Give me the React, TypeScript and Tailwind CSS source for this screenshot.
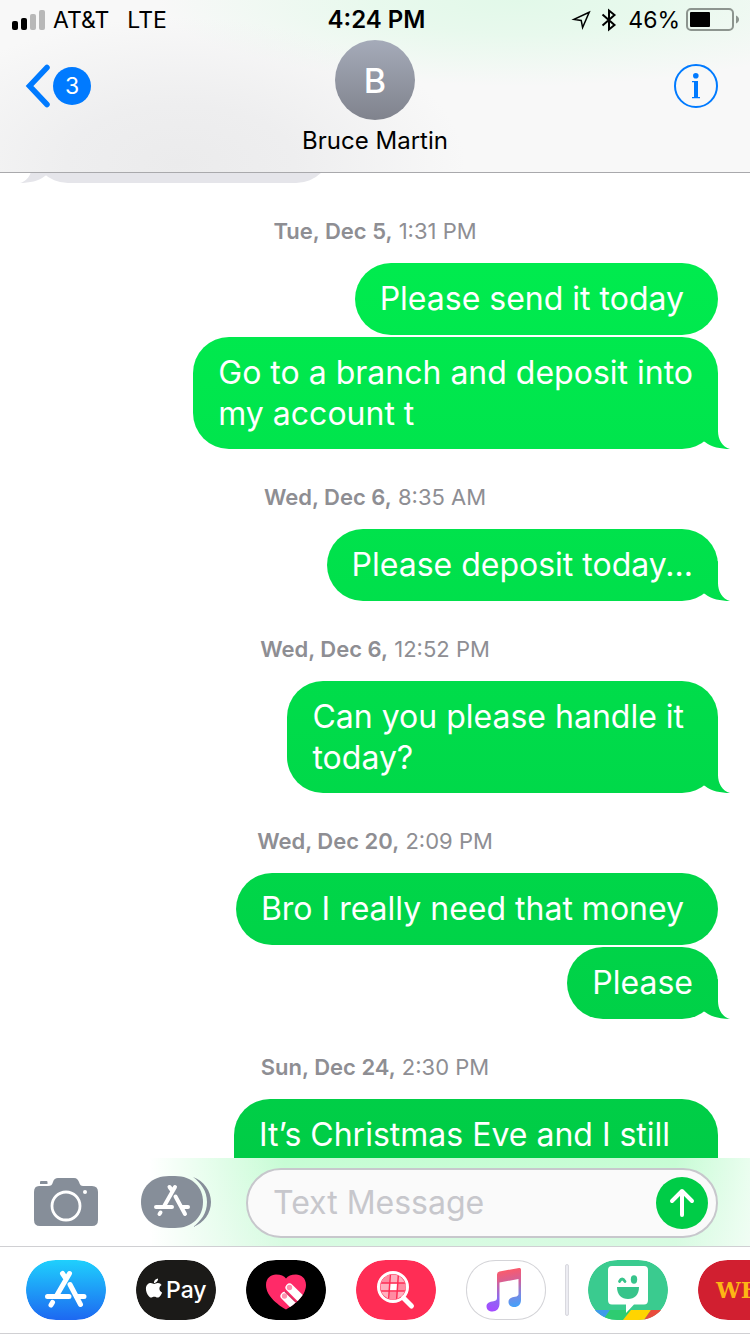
import type { ReactNode } from 'react';
import { FaApple } from 'react-icons/fa';

type Message = { text: string; tail?: boolean; wide?: boolean };
type Group = { day: string; time: string; messages: Message[] };

const groups: Group[] = [
  {
    day: 'Tue, Dec 5,',
    time: '1:31 PM',
    messages: [
      { text: 'Please send it today ' },
      { text: 'Go to a branch and deposit into\nmy account t', tail: true },
    ],
  },
  { day: 'Wed, Dec 6,', time: '8:35 AM', messages: [{ text: 'Please deposit today...', tail: true }] },
  { day: 'Wed, Dec 6,', time: '12:52 PM', messages: [{ text: 'Can you please handle it \ntoday?', tail: true }] },
  {
    day: 'Wed, Dec 20,',
    time: '2:09 PM',
    messages: [{ text: 'Bro I really need that money ' }, { text: 'Please', tail: true }],
  },
  { day: 'Sun, Dec 24,', time: '2:30 PM', messages: [{ text: 'It’s Christmas Eve and I still', wide: true }] },
];

const sentFill = 'bg-[linear-gradient(to_bottom,#00eb4e_20%,#00cc46_87%)] bg-fixed';

function Bubble({ text, tail, wide }: Message) {
  return (
    <div
      className={`relative rounded-[36px] px-[25px] py-[15px] text-[32px] leading-[41px] whitespace-pre text-white ${wide ? 'min-h-28 w-[484px]' : 'min-h-[72px]'} ${sentFill}`}
    >
      {text}
      {tail && (
        <span
          aria-hidden="true"
          className={`absolute -right-3 bottom-0 h-10 w-[34px] [clip-path:path('M0_10L22_0V22C22_30_26_38_34_40C25_40_15_38_9_33L0_28Z')] ${sentFill}`}
        />
      )}
    </div>
  );
}

function StatusBar() {
  return (
    <div className="grid h-10 grid-cols-[1fr_auto_1fr] items-center px-3 text-[23px] leading-none">
      <div className="flex items-center">
        <svg width="33" height="20" viewBox="0 0 33 20" aria-hidden="true">
          <rect x="0" y="11" width="6" height="9" rx="2" />
          <rect x="9" y="8" width="6" height="12" rx="2" />
          <rect x="18" y="4" width="6" height="16" rx="2" fill="#b8b8b8" />
          <rect x="27" y="0" width="6" height="20" rx="2" fill="#b8b8b8" />
        </svg>
        <span className="ml-2">AT&amp;T</span>
        <span className="ml-[18px]">LTE</span>
      </div>
      <span className="pl-[3px] text-2xl leading-none font-semibold">4:24 PM</span>
      <div className="-mr-[2px] flex items-center justify-end">
        <svg width="20" height="20" viewBox="0 0 20 20" fill="none" stroke="#000" strokeWidth="1.5" aria-hidden="true">
          <path d="M18.200 2.300 3 9.400 10.200 10.400 11.600 17.500Z" />
        </svg>
        <svg className="ml-[10px]" width="16" height="24" viewBox="0 0 16 24" fill="none" stroke="#000" strokeWidth="2" aria-hidden="true">
          <path d="M1.500 6.500 13.500 17 8 21.500V2.500L13.500 7 1.500 17.500" />
        </svg>
        <span className="ml-[11px]">46%</span>
        <svg className="ml-[6px]" width="54" height="24" viewBox="0 0 54 24" aria-hidden="true">
          <rect x="1" y="1" width="46" height="21" rx="4" fill="none" stroke="#8d958f" strokeWidth="2" />
          <rect x="4" y="4" width="20" height="15" rx="1" />
          <path d="M50 7.500C54 9 54 14 50 15.500Z" fill="#8d958f" />
        </svg>
      </div>
    </div>
  );
}

function Header() {
  return (
    <header className="shrink-0 border-b border-[#a9a9ac] bg-[#f8f8f8] bg-[radial-gradient(ellipse_38%_85%_at_24%_95%,#ebebec_0%,#eeeeef_40%,#f8f8f800_100%),radial-gradient(ellipse_48%_50%_at_69%_0%,#e2f9e9_0%,#e8f9ed_40%,#f8f8f800_100%)] text-black">
      <StatusBar />
      <div className="grid h-[132px] grid-cols-[1fr_auto_1fr] items-start px-8">
        <button type="button" aria-label="Back" className="mt-6 -ml-[7px] flex h-11 items-center justify-self-start">
          <svg width="26" height="44" viewBox="0 0 26 44" fill="none" stroke="#007aff" strokeWidth="5.500" strokeLinecap="round" strokeLinejoin="miter" aria-hidden="true">
            <path d="M22 3.500 4.500 22 22 40.500" />
          </svg>
          <span className="ml-[2px] flex size-[38px] items-center justify-center rounded-full bg-[#007aff] text-[23px] leading-none text-white">3</span>
        </button>
        <div className="flex flex-col items-center">
          <div className="flex size-20 items-center justify-center rounded-full bg-linear-to-b from-[#a5abb9] to-[#80838d] pt-px text-[34px] font-medium text-white">B</div>
          <h1 className="mt-[6px] text-2xl leading-[30px]">Bruce Martin</h1>
        </div>
        <button type="button" aria-label="Details" className="mt-6 justify-self-end">
          <svg width="44" height="44" viewBox="0 0 44 44" aria-hidden="true">
            <circle cx="22" cy="22" r="21" fill="none" stroke="#007aff" strokeWidth="2" />
            <circle cx="21.800" cy="11.700" r="2.800" fill="#007aff" />
            <path d="M18 17h6v16h2v1.200h-8V33h2V18.200h-2Z" fill="#007aff" />
          </svg>
        </button>
      </div>
    </header>
  );
}

function Thread() {
  return (
    <main className="min-h-0 flex-1 overflow-hidden bg-white">
      <div className="relative -mt-[62px] ml-8 h-[72px] w-[300px] rounded-[36px] bg-[#e5e5ea]">
        <svg className="absolute bottom-0 -left-3" width="34" height="40" viewBox="0 0 34 40" fill="#e5e5ea" aria-hidden="true">
          <path d="M34 10L12 0V22C12 30 8 38 0 40C9 40 19 38 25 33L34 28Z" />
        </svg>
      </div>
      {groups.map((group) => (
        <section key={group.day + group.time}>
          <h2 className="pt-[33px] pb-[17px] text-center text-[22px] leading-[30px] text-[#8e8e93]">
            <span className="font-semibold">{group.day}</span> {group.time}
          </h2>
          <div className="flex flex-col items-end gap-[2px] pr-8">
            {group.messages.map((message) => (
              <Bubble key={message.text} {...message} />
            ))}
          </div>
        </section>
      ))}
    </main>
  );
}

function Composer() {
  return (
    <form
      onSubmit={(event) => event.preventDefault()}
      className="flex h-[88px] shrink-0 items-center bg-[#fefefe] bg-[linear-gradient(to_right,#ffffff_20%,#ffffff00_38%,#ffffff00_90%,#ffffffa0_100%),linear-gradient(to_bottom,#c6fcd4,#d8fbe2)] pr-8 pl-[34px]"
    >
      <button type="button" aria-label="Camera">
        <svg width="64" height="48" viewBox="0 0 64 48" aria-hidden="true">
          <path d="M7 3h5.500q1 0 1 1v2h-7.500V4q0-1 1-1Z" fill="#868e99" />
          <path d="M5 8H14C17 8 18 7 19 4 20 1 21.500 0 24 0H40C43 0 44 2 45 4 46 7 47 8 49 8H58Q64 8 64 14V42Q64 48 58 48H6Q0 48 0 42V14Q0 8 5 8Z" fill="#868e99" />
          <circle cx="32" cy="28" r="14" fill="none" stroke="#fff" strokeWidth="2.800" />
          <circle cx="51" cy="14" r="2" fill="#fff" />
        </svg>
      </button>
      <button type="button" aria-label="Apps" className="ml-[43px]">
        <svg width="70" height="52" viewBox="0 0 70 52" fill="#868e99" aria-hidden="true">
          <path d="M28 0H34C51 0 62 11 62 26S51 52 34 52H28C11 52 0 41 0 26S11 0 28 0Z" />
          <path d="M52 1C63 5 70 15 70 26S63 47 52 51C60 45 66 37 66 26S60 7 52 1Z" />
          <g fill="none" stroke="#fff" strokeWidth="4" strokeLinecap="round">
            <path d="M34 11 23.500 29.500M28.500 11 31 14.500M34.500 20.500 44 38M15 31H31M41.500 31H47M19.500 36.500 18.500 38" />
          </g>
        </svg>
      </button>
      <div className="mt-[2px] ml-[35px] flex h-[70px] min-w-0 flex-1 items-center rounded-full border-2 border-[#c7c7cc] bg-[#fafafa] pr-2 pl-[25px]">
        <input
          type="text"
          aria-label="Text Message"
          placeholder="Text Message"
          className="min-w-0 flex-1 bg-transparent text-[32px] leading-10 text-black outline-none placeholder:text-[#c7c7cc]"
        />
        <button type="submit" aria-label="Send" className="flex size-[52px] shrink-0 items-center justify-center rounded-full bg-[#00cc47]">
          <svg width="28" height="32" viewBox="0 0 28 32" fill="none" stroke="#fff" strokeWidth="4" strokeLinecap="round" strokeLinejoin="round" aria-hidden="true">
            <path d="M14 28V4M4 14 14 4 24 14" />
          </svg>
        </button>
      </div>
    </form>
  );
}

const pill = 'M30 0H50C68 0 80 13 80 30S68 60 50 60H30C12 60 0 47 0 30S12 0 30 0Z';

function AppTile({ label, fill, outlined, children }: { label: string; fill: string; outlined?: boolean; children: ReactNode }) {
  return (
    <button type="button" aria-label={label} className="h-[60px] w-20 shrink-0">
      <svg width="80" height="60" viewBox="0 0 80 60" className="block" aria-hidden="true">
        <defs>
          <linearGradient id="store" x1="0" y1="0" x2="0" y2="1">
            <stop offset="0" stopColor="#1fd0fd" />
            <stop offset="1" stopColor="#1d68f1" />
          </linearGradient>
          <linearGradient id="note" gradientUnits="userSpaceOnUse" x1="34" y1="10" x2="42" y2="50">
            <stop offset="0" stopColor="#ff5a66" />
            <stop offset="0.350" stopColor="#d0619c" />
            <stop offset="0.650" stopColor="#7f86e0" />
            <stop offset="1" stopColor="#3aa6ff" />
          </linearGradient>
          <linearGradient id="noteLeft" gradientUnits="userSpaceOnUse" x1="20" y1="48" x2="33" y2="12">
            <stop offset="0" stopColor="#a44dff" />
            <stop offset="0.350" stopColor="#8a6bf0" />
            <stop offset="1" stopColor="#ff5a66" />
          </linearGradient>
          <clipPath id="pillClip">
            <path d={pill} />
          </clipPath>
        </defs>
        <g clipPath="url(#pillClip)">
          <path d={pill} fill={fill} stroke={outlined ? '#d4d4d8' : 'none'} strokeWidth="2" />
          {children}
        </g>
      </svg>
    </button>
  );
}

function AppStrip() {
  return (
    <nav aria-label="Apps" className="flex h-[88px] shrink-0 items-start gap-[30px] overflow-hidden border-y border-[#d0d0d3] bg-white pt-[13px] pl-[26px]">
      <AppTile label="App Store" fill="url(#store)">
        <g fill="none" stroke="#fff" strokeWidth="5" strokeLinecap="round">
          <path d="M43.500 13.500 31 35M36.500 13.500 39.500 18M44 24.500 54.500 44.500M21.500 36.500H43M51.500 36.500H58M26.500 42.500 25 45" />
        </g>
      </AppTile>
      <AppTile label="Apple Pay" fill="#1b1a18">
        <FaApple x="7" y="17" size={22} color="#fff" />
        <text x="30" y="38" fill="#fff" fontSize="23" fontWeight="500">Pay</text>
      </AppTile>
      <AppTile label="Digital Touch" fill="#000">
        <defs>
          <clipPath id="heartClip">
            <path d="M40 49.500C34 46 20 37 20 25C20 18 25 14.500 30 14.500C35 14.500 38 16 40 18.500C42 16 45 14.500 50 14.500C55 14.500 60 18 60 25C60 37 46 46 40 49.500Z" />
          </clipPath>
        </defs>
        <g clipPath="url(#heartClip)">
          <path d="M20 14h40v36H20Z" fill="#ff2a68" />
          <g stroke="#fff" strokeWidth="8" strokeLinecap="round">
            <path d="M43.500 27.500 62 46M38.500 36 55 52.500" />
          </g>
          <path d="M39 31.500 60 52" stroke="#cc2456" strokeWidth="1.200" />
          <circle cx="43.500" cy="27.500" r="2.700" fill="#ff8fae" />
          <circle cx="38.500" cy="36" r="2.700" fill="#ff8fae" />
        </g>
      </AppTile>
      <AppTile label="Images" fill="#ff2d55">
        <defs>
          <clipPath id="lensClip">
            <circle cx="37" cy="27" r="12.500" />
          </clipPath>
        </defs>
        <g clipPath="url(#lensClip)">
          <path d="M24 14h26v26H24Z" fill="#ffb0bf" />
          <path d="M34 23.500h7v7h-7Z" fill="#fff" />
          <path d="M24 14h9v9h-9ZM42 23h8v8h-8ZM34 32h7v8h-7Z" fill="#ff8ba2" />
          <path d="M34.500 13 32.500 41M42.500 13 40.500 41M24 23H50M24 31H50" stroke="#ff2d55" strokeWidth="1.500" />
        </g>
        <circle cx="37" cy="27" r="14.500" fill="none" stroke="#fff" strokeWidth="3" />
        <path d="M47.500 38 55.500 46" stroke="#fff" strokeWidth="5" strokeLinecap="round" />
      </AppTile>
      <AppTile label="Music" fill="#fff" outlined>
        <path d="M31 14.500Q31 12 33.500 11.500L53 8Q55 7.500 55 9.500V40C55 44.500 52 47 48.500 47C45 47 42.500 45 42.500 42C42.500 38.500 45.500 37.300 49 36.700Q52.500 36.300 52.500 34V19L33.500 22.500H31Z" fill="url(#note)" />
        <path d="M31 22H33.500V43.500C33.500 48.500 30.500 51.500 26.500 51.500C23 51.500 20.500 49.500 20.500 46.500C20.500 43 23.500 41.800 27.500 41.200Q31 40.800 31 38Z" fill="url(#noteLeft)" />
      </AppTile>
      <div className="-mx-[11px] mt-1 h-[52px] w-1 shrink-0 rounded-sm border border-[#d9d9df] bg-[#ececf2]" />
      <AppTile label="Bitmoji" fill="#3acb8f">
        <path d="M0 50H22L15 60H0Z" fill="#3e9be9" />
        <path d="M22 50H43L35 60H15Z" fill="#2ecc71" />
        <path d="M43 50H63L56 60H35Z" fill="#ffd400" />
        <path d="M63 50H80V60H56Z" fill="#e94b3c" />
        <path d="M24 6H56Q60 6 60 10V40Q60 44.500 56 44.500H46L38 53V44.500H24Q20 44.500 20 40V10Q20 6 24 6Z" fill="#fff" />
        <path d="M29 27H51C51 35 46.500 39 40 39S29 35 29 27Z" fill="#37c48b" />
        <ellipse cx="46" cy="19.500" rx="3.200" ry="4.200" fill="#37c48b" />
        <path d="M31.500 21.500Q34 16.500 37 21.500" fill="none" stroke="#37c48b" strokeWidth="2.800" strokeLinecap="round" />
      </AppTile>
      <AppTile label="Wells Fargo" fill="#d11f30">
        <text x="18" y="38" fill="#fdb515" fontSize="22" fontWeight="700" fontFamily="'DejaVu Serif', serif">WE</text>
      </AppTile>
    </nav>
  );
}

export default function App() {
  return (
    <div className="flex h-screen flex-col overflow-hidden bg-white font-['Inter','Liberation_Sans',sans-serif]">
      <Header />
      <Thread />
      <Composer />
      <AppStrip />
    </div>
  );
}
